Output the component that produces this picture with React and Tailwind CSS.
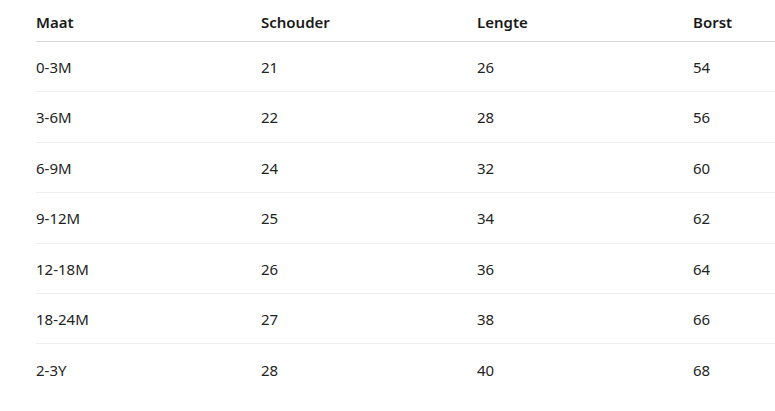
const rows = [
  ["0-3M", "21", "26", "54"],
  ["3-6M", "22", "28", "56"],
  ["6-9M", "24", "32", "60"],
  ["9-12M", "25", "34", "62"],
  ["12-18M", "26", "36", "64"],
  ["18-24M", "27", "38", "66"],
  ["2-3Y", "28", "40", "68"],
];

export default function App() {
  return (
    <div
      className="w-[775px] h-[411px] bg-white pl-[36px] overflow-hidden text-[15px] text-[#242424]"
      style={{ fontFamily: '"Segoe UI", "Noto Sans", sans-serif' }}
    >
      <div className="grid grid-cols-[225px_216px_216px_1fr] h-[42px] items-center pt-[4px] border-b border-[#d6d6d6] font-semibold text-[#1a1a1a]">
        <div>Maat</div>
        <div>Schouder</div>
        <div>Lengte</div>
        <div>Borst</div>
      </div>
      {rows.map((r, i) => (
        <div
          key={i}
          className={`grid grid-cols-[225px_216px_216px_1fr] h-[50.4px] items-center pt-[1px] ${
            i < rows.length - 1 ? "border-b border-[#efefef]" : ""
          }`}
        >
          {r.map((c, j) => (
            <div key={j}>{c}</div>
          ))}
        </div>
      ))}
    </div>
  );
}
